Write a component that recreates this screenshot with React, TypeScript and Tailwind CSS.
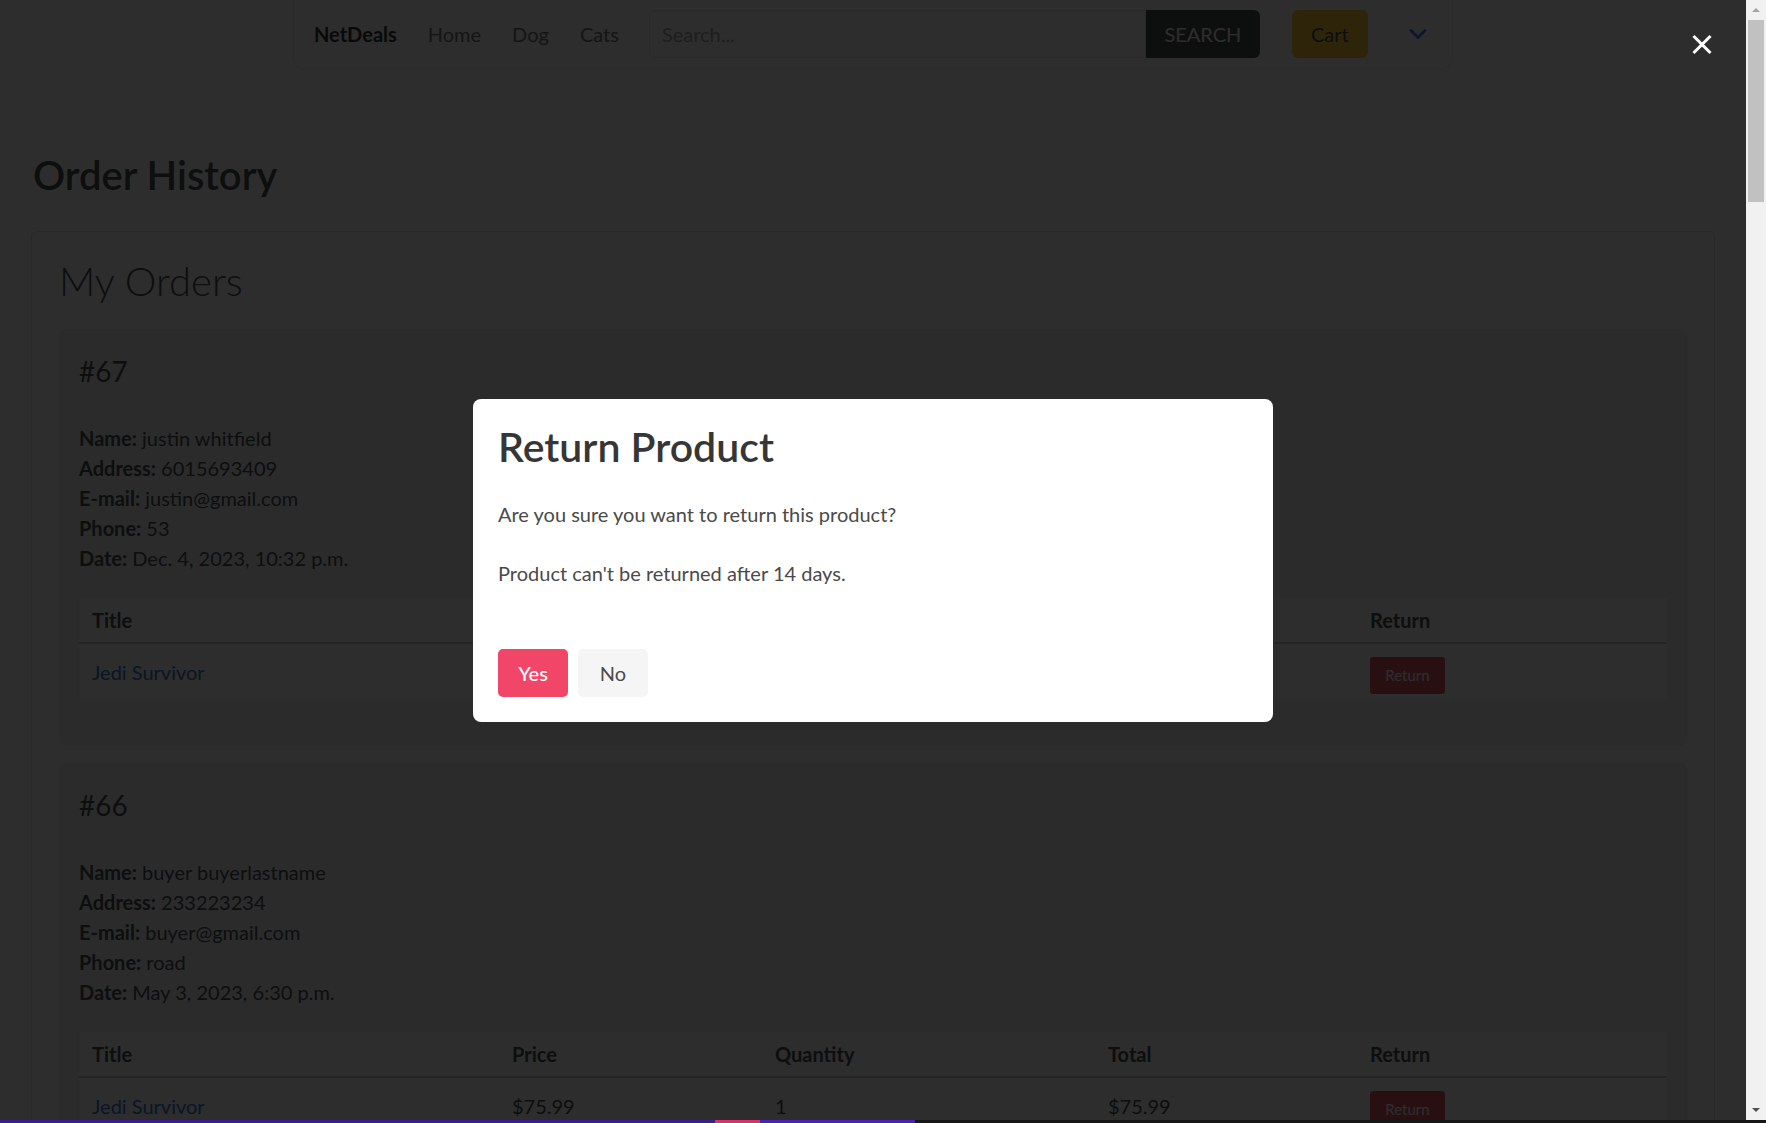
import React from "react"

type Item = { title: string; price: string; qty: number; total: string }
type Order = {
  id: number
  name: string
  address: string
  email: string
  phone: string
  date: string
  items: Item[]
}

const orders: Order[] = [
  {
    id: 67,
    name: "justin whitfield",
    address: "6015693409",
    email: "justin@gmail.com",
    phone: "53",
    date: "Dec. 4, 2023, 10:32 p.m.",
    items: [{ title: "Jedi Survivor", price: "$75.99", qty: 1, total: "$75.99" }],
  },
  {
    id: 66,
    name: "buyer buyerlastname",
    address: "233223234",
    email: "buyer@gmail.com",
    phone: "road",
    date: "May 3, 2023, 6:30 p.m.",
    items: [{ title: "Jedi Survivor", price: "$75.99", qty: 1, total: "$75.99" }],
  },
]

const Navbar = () => {
  return (
    <nav className="mx-auto flex h-[70px] w-[1160px] items-center rounded-b-xl border border-t-0 border-[#e6e6e6] bg-[#fdfdfd] pb-[2px] pl-[20px] pr-[25px] text-[20px]">
      <a className="font-bold text-black">NetDeals</a>
      <div className="ml-[31px] flex gap-[31px] text-[#555]">
        <a>Home</a>
        <a>Dog</a>
        <a>Cats</a>
      </div>
      <div className="ml-[30px] flex h-[48px]">
        <input
          placeholder="Search..."
          className="h-full w-[497px] rounded-l-md border border-[#dee2e6] bg-white px-[12px] text-[20px] outline-none placeholder:text-[#8d9297]"
        />
        <button className="h-full w-[114px] rounded-r-md bg-[#212529] text-white">SEARCH</button>
      </div>
      <button className="ml-[32px] h-[48px] w-[76px] rounded-md bg-[#ffc107] text-[#212529]">Cart</button>
      <svg className="ml-auto" width="18" height="12" viewBox="0 0 18 12" fill="none">
        <path d="M2 2.5 L9 9.5 L16 2.5" stroke="#0d6efd" strokeWidth="3" strokeLinecap="round" strokeLinejoin="round" />
      </svg>
    </nav>
  )
}

const Detail = ({ label, value }: { label: string; value: string }) => (
  <div>
    <span className="font-bold">{label}</span> {value}
  </div>
)

const OrderCard = ({ order }: { order: Order }) => {
  return (
    <div className="rounded-md bg-[#edf0f7] px-[20px] pb-[46px] pt-[22px]">
      <h3 className="text-[28px] leading-[40px] text-[#212529]">#{order.id}</h3>
      <div className="mt-[32px] text-[20px] leading-[30px] text-[#212529]">
        <Detail label="Name:" value={order.name} />
        <Detail label="Address:" value={order.address} />
        <Detail label="E-mail:" value={order.email} />
        <Detail label="Phone:" value={order.phone} />
        <Detail label="Date:" value={order.date} />
      </div>
      <table className="mt-[25px] w-full table-fixed bg-[#fbfbfc] text-left text-[20px] text-[#212529]">
        <colgroup>
          <col className="w-[420px]" />
          <col className="w-[263px]" />
          <col className="w-[333px]" />
          <col className="w-[262px]" />
          <col />
        </colgroup>
        <thead>
          <tr className="h-[45px] border-b-2 border-[#c4c4c4]">
            <th className="px-[13px] font-bold">Title</th>
            <th className="px-[13px] font-bold">Price</th>
            <th className="px-[13px] font-bold">Quantity</th>
            <th className="px-[13px] font-bold">Total</th>
            <th className="px-[13px] font-bold">Return</th>
          </tr>
        </thead>
        <tbody>
          {order.items.map((item, index) => (
            <tr key={index} className="h-[57px]">
              <td className="px-[13px] text-[#0a58ca]">{item.title}</td>
              <td className="px-[13px]">{item.price}</td>
              <td className="px-[13px]">{item.qty}</td>
              <td className="px-[13px]">{item.total}</td>
              <td className="px-[13px]">
                <button className="mt-[6px] h-[37px] w-[75px] rounded-[3px] bg-[#dc3545] text-[15px] text-white">
                  Return
                </button>
              </td>
            </tr>
          ))}
        </tbody>
      </table>
    </div>
  )
}

const ReturnModal = () => {
  return (
    <div className="absolute inset-0 flex items-center justify-center bg-[rgba(10,10,10,0.86)]">
      <div className="w-[800px] rounded-[8px] bg-white px-[25px] pb-[25px] pt-[25px]">
        <h2 className="text-[41px] font-semibold leading-[45px] text-[#363636]">Return Product</h2>
        <p className="mt-[32px] text-[20px] leading-[27px] text-[#4a4a4a]">Are you sure you want to return this product?</p>
        <p className="mt-[32px] text-[20px] leading-[27px] text-[#4a4a4a]">Product can't be returned after 14 days.</p>
        <div className="mt-[62px] flex gap-[10px]">
          <button className="h-[48px] w-[70px] rounded-[5px] bg-[#f14668] text-[20px] font-medium text-white">Yes</button>
          <button className="h-[48px] w-[70px] rounded-[5px] bg-[#f5f5f5] text-[20px] text-[#4a4a4a]">No</button>
        </div>
      </div>
      <button className="absolute right-[20px] top-[20px] flex h-12 w-12 items-center justify-center">
        <span className="absolute h-[3px] w-6 rotate-45 bg-white" />
        <span className="absolute h-[3px] w-6 -rotate-45 bg-white" />
      </button>
    </div>
  )
}

const Scrollbar = () => (
  <div className="flex w-[20px] flex-col items-center bg-[#f1f1f1]">
    <div className="flex h-[20px] items-center">
      <div className="h-0 w-0 border-x-[4px] border-b-[4px] border-x-transparent border-b-[#a3a3a3]" />
    </div>
    <div className="h-[182px] w-[16px] bg-[#c1c1c1]" />
    <div className="mt-auto flex h-[20px] items-center">
      <div className="h-0 w-0 border-x-[4px] border-t-[4px] border-x-transparent border-t-[#505050]" />
    </div>
  </div>
)

export default function App() {
  return (
    <div className="flex h-screen flex-col overflow-hidden font-['Lato',sans-serif]">
      <div className="flex min-h-0 flex-1">
        <div className="relative flex-1 overflow-hidden bg-white">
          <Navbar />
          <main className="px-[31px]">
            <h1 className="ml-[2px] mt-[81px] text-[40px] font-semibold leading-[48px] text-[#212529]">Order History</h1>
            <div className="mt-[32px] rounded-md border border-[#d9d9d9] bg-white px-[27px] pt-[25px]">
              <h2 className="text-[40px] font-light leading-[48px] text-[#212529]">My Orders</h2>
              <div className="mt-[24px] flex flex-col gap-[17px]">
                {orders.map((order) => (
                  <OrderCard key={order.id} order={order} />
                ))}
              </div>
            </div>
          </main>
          <ReturnModal />
        </div>
        <Scrollbar />
      </div>
      <div className="flex h-[3px]">
        <div className="w-[715px] bg-[#3a1e8a]" />
        <div className="w-[45px] bg-[#d6336c]" />
        <div className="w-[155px] bg-[#4b23b0]" />
        <div className="flex-1 bg-[#161616]" />
      </div>
    </div>
  )
}
